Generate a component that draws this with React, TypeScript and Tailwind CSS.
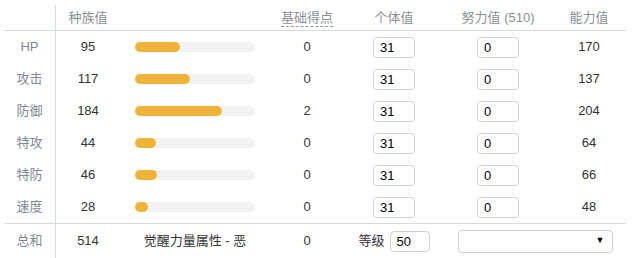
const stats = [
  { label: "HP", base: 95, ev: 0, value: 170 },
  { label: "攻击", base: 117, ev: 0, value: 137 },
  { label: "防御", base: 184, ev: 2, value: 204 },
  { label: "特攻", base: 44, ev: 0, value: 64 },
  { label: "特防", base: 46, ev: 0, value: 66 },
  { label: "速度", base: 28, ev: 0, value: 48 },
];

const cols = "grid grid-cols-[52px_64px_150px_74px_100px_108px_74px] items-center";

function NumBox({ value, width = "w-[42px]" }: { value: string; width?: string }) {
  return (
    <input
      readOnly
      value={value}
      className={`${width} h-[21px] rounded-[4px] border border-[#cfcfcf] bg-white pl-[6px] text-[13px] text-black outline-none`}
    />
  );
}

export default function App() {
  return (
    <div
      className="h-[258px] w-[642px] bg-white pt-[3px] pl-[4px] text-[13px] text-[#333]"
      style={{ fontFamily: '"Liberation Sans", "Noto Sans CJK SC", sans-serif' }}
    >
      <div className="w-[622px]">
        <div className={`${cols} h-[28px] border-b border-[#d3dae2] pt-[2px] text-[#8a8f96]`}>
          <div className="h-full border-r border-[#d3dae2]" />
          <div className="text-center">种族值</div>
          <div />
          <div className="text-center">
            <span className="border-b border-dashed border-[#999] pb-[1px]">基础得点</span>
          </div>
          <div className="text-center">个体值</div>
          <div className="text-center">努力值 (510)</div>
          <div className="text-center">能力值</div>
        </div>

        {stats.map((s) => (
          <div key={s.label} className={`${cols} h-[32px]`}>
            <div className="flex h-full items-center justify-center border-r border-[#d3dae2] text-[#7d8794]">
              {s.label}
            </div>
            <div className="text-center">{s.base}</div>
            <div className="px-[15px]">
              <div className="h-[10px] w-full rounded-full bg-[#f2f2f2]">
                <div
                  className="h-full rounded-full bg-[#efb33b]"
                  style={{ width: `${(s.base / 255) * 100}%` }}
                />
              </div>
            </div>
            <div className="text-center">{s.ev}</div>
            <div className="flex justify-center">
              <NumBox value="31" />
            </div>
            <div className="flex justify-center">
              <NumBox value="0" />
            </div>
            <div className="text-center">{s.value}</div>
          </div>
        ))}

        <div className={`${cols} h-[35px] border-t border-[#d3dae2]`}>
          <div className="flex h-full items-center justify-center border-r border-[#d3dae2] text-[#7d8794]">
            总和
          </div>
          <div className="text-center">514</div>
          <div className="text-center">觉醒力量属性 - 恶</div>
          <div className="text-center">0</div>
          <div className="flex items-center justify-center gap-[5px]">
            <span>等级</span>
            <NumBox value="50" width="w-[40px]" />
          </div>
          <div className="col-span-2 flex justify-center">
            <div className="flex h-[23px] w-[155px] items-center justify-end rounded-[4px] border border-[#cfcfcf] bg-white pr-[7px] text-[9px] text-black">
              ▼
            </div>
          </div>
        </div>
      </div>
    </div>
  );
}
